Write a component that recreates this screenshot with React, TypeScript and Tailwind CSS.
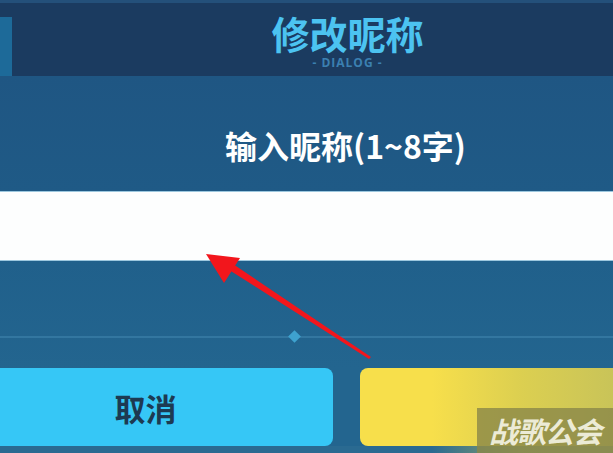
import React from 'react'

const cjk = { fontFamily: '"Noto Sans CJK SC", "Noto Sans", sans-serif' }

function Arrow() {
  return (
    <svg className="pointer-events-none absolute left-0 top-0" width="613" height="453" viewBox="0 0 613 453">
      <polygon points="371,357 230,262 226,268 369,359" fill="#f2161c" />
      <polygon points="206,254 240,258 224,283" fill="#f2161c" />
    </svg>
  )
}

function Watermark() {
  return (
    <div className="pointer-events-none absolute right-0 bottom-0 h-[85px] w-[181px] bg-gradient-to-r from-[#f7df4b]/0 via-[#c9c454]/60 to-[#b5b85e]/70">
      <div className="absolute right-0 bottom-0 flex h-[45px] w-[136px] items-center justify-center bg-[#8a8748]/80">
        <span className="text-[29px] font-bold italic leading-none tracking-[-1px] text-[#ecebd6]" style={cjk}>战歌公会</span>
      </div>
    </div>
  )
}

export default function App() {
  return (
    <div className="relative h-[453px] w-[613px] overflow-hidden bg-[#1f5885]" style={cjk}>
      {/* header */}
      <div className="flex h-[76px] border-t-[3px] border-[#24507a] bg-[#1b3b60]">
        <div className="mt-[14px] w-[12px] bg-[#1d6a99]" />
        <div className="flex flex-1 flex-col items-center pl-[70px] pt-[10px]">
          <div className="text-[38px] font-bold leading-[40px] text-[#4cc3f1]">修改昵称</div>
          <div className="mt-[4px] text-[12px] font-bold leading-[12px] tracking-[1px] text-[#3b80b1]" style={{ fontFamily: '"Open Sans", sans-serif' }}>- DIALOG -</div>
        </div>
      </div>

      {/* prompt */}
      <div className="flex h-[115px] items-center justify-center bg-gradient-to-b from-[#1f5683] to-[#1f5a86] pl-[78px] pt-[22px]">
        <span className="text-[32px] font-bold leading-none text-white">输入昵称(1~8字)</span>
      </div>

      {/* input */}
      <div className="h-[70px] border-t border-b border-[#9cc7de] bg-[#fdfefe]" />

      {/* spacer with divider */}
      <div className="relative h-[107px] bg-gradient-to-b from-[#20608b] to-[#23658f]">
        <div className="absolute left-0 right-0 top-[75px] h-[2px] bg-[#3a7fa8]/70" />
        <div className="absolute left-[290px] top-[71px] h-[9px] w-[9px] rotate-45 bg-[#3ea2cf]" />
      </div>

      {/* buttons */}
      <div className="flex h-[78px] gap-[27px] bg-[#23658f]">
        <div className="flex w-[333px] items-center justify-center rounded-r-[8px] bg-[#36c7f6] pr-[42px]">
          <span className="text-[31px] font-bold leading-none text-[#1d3a52]">取消</span>
        </div>
        <div className="flex-1 rounded-l-[8px] bg-[#f7df4b]" />
      </div>
      <div className="h-[7px] bg-[#2a6a91]" />

      <Watermark />
      <Arrow />
    </div>
  )
}
